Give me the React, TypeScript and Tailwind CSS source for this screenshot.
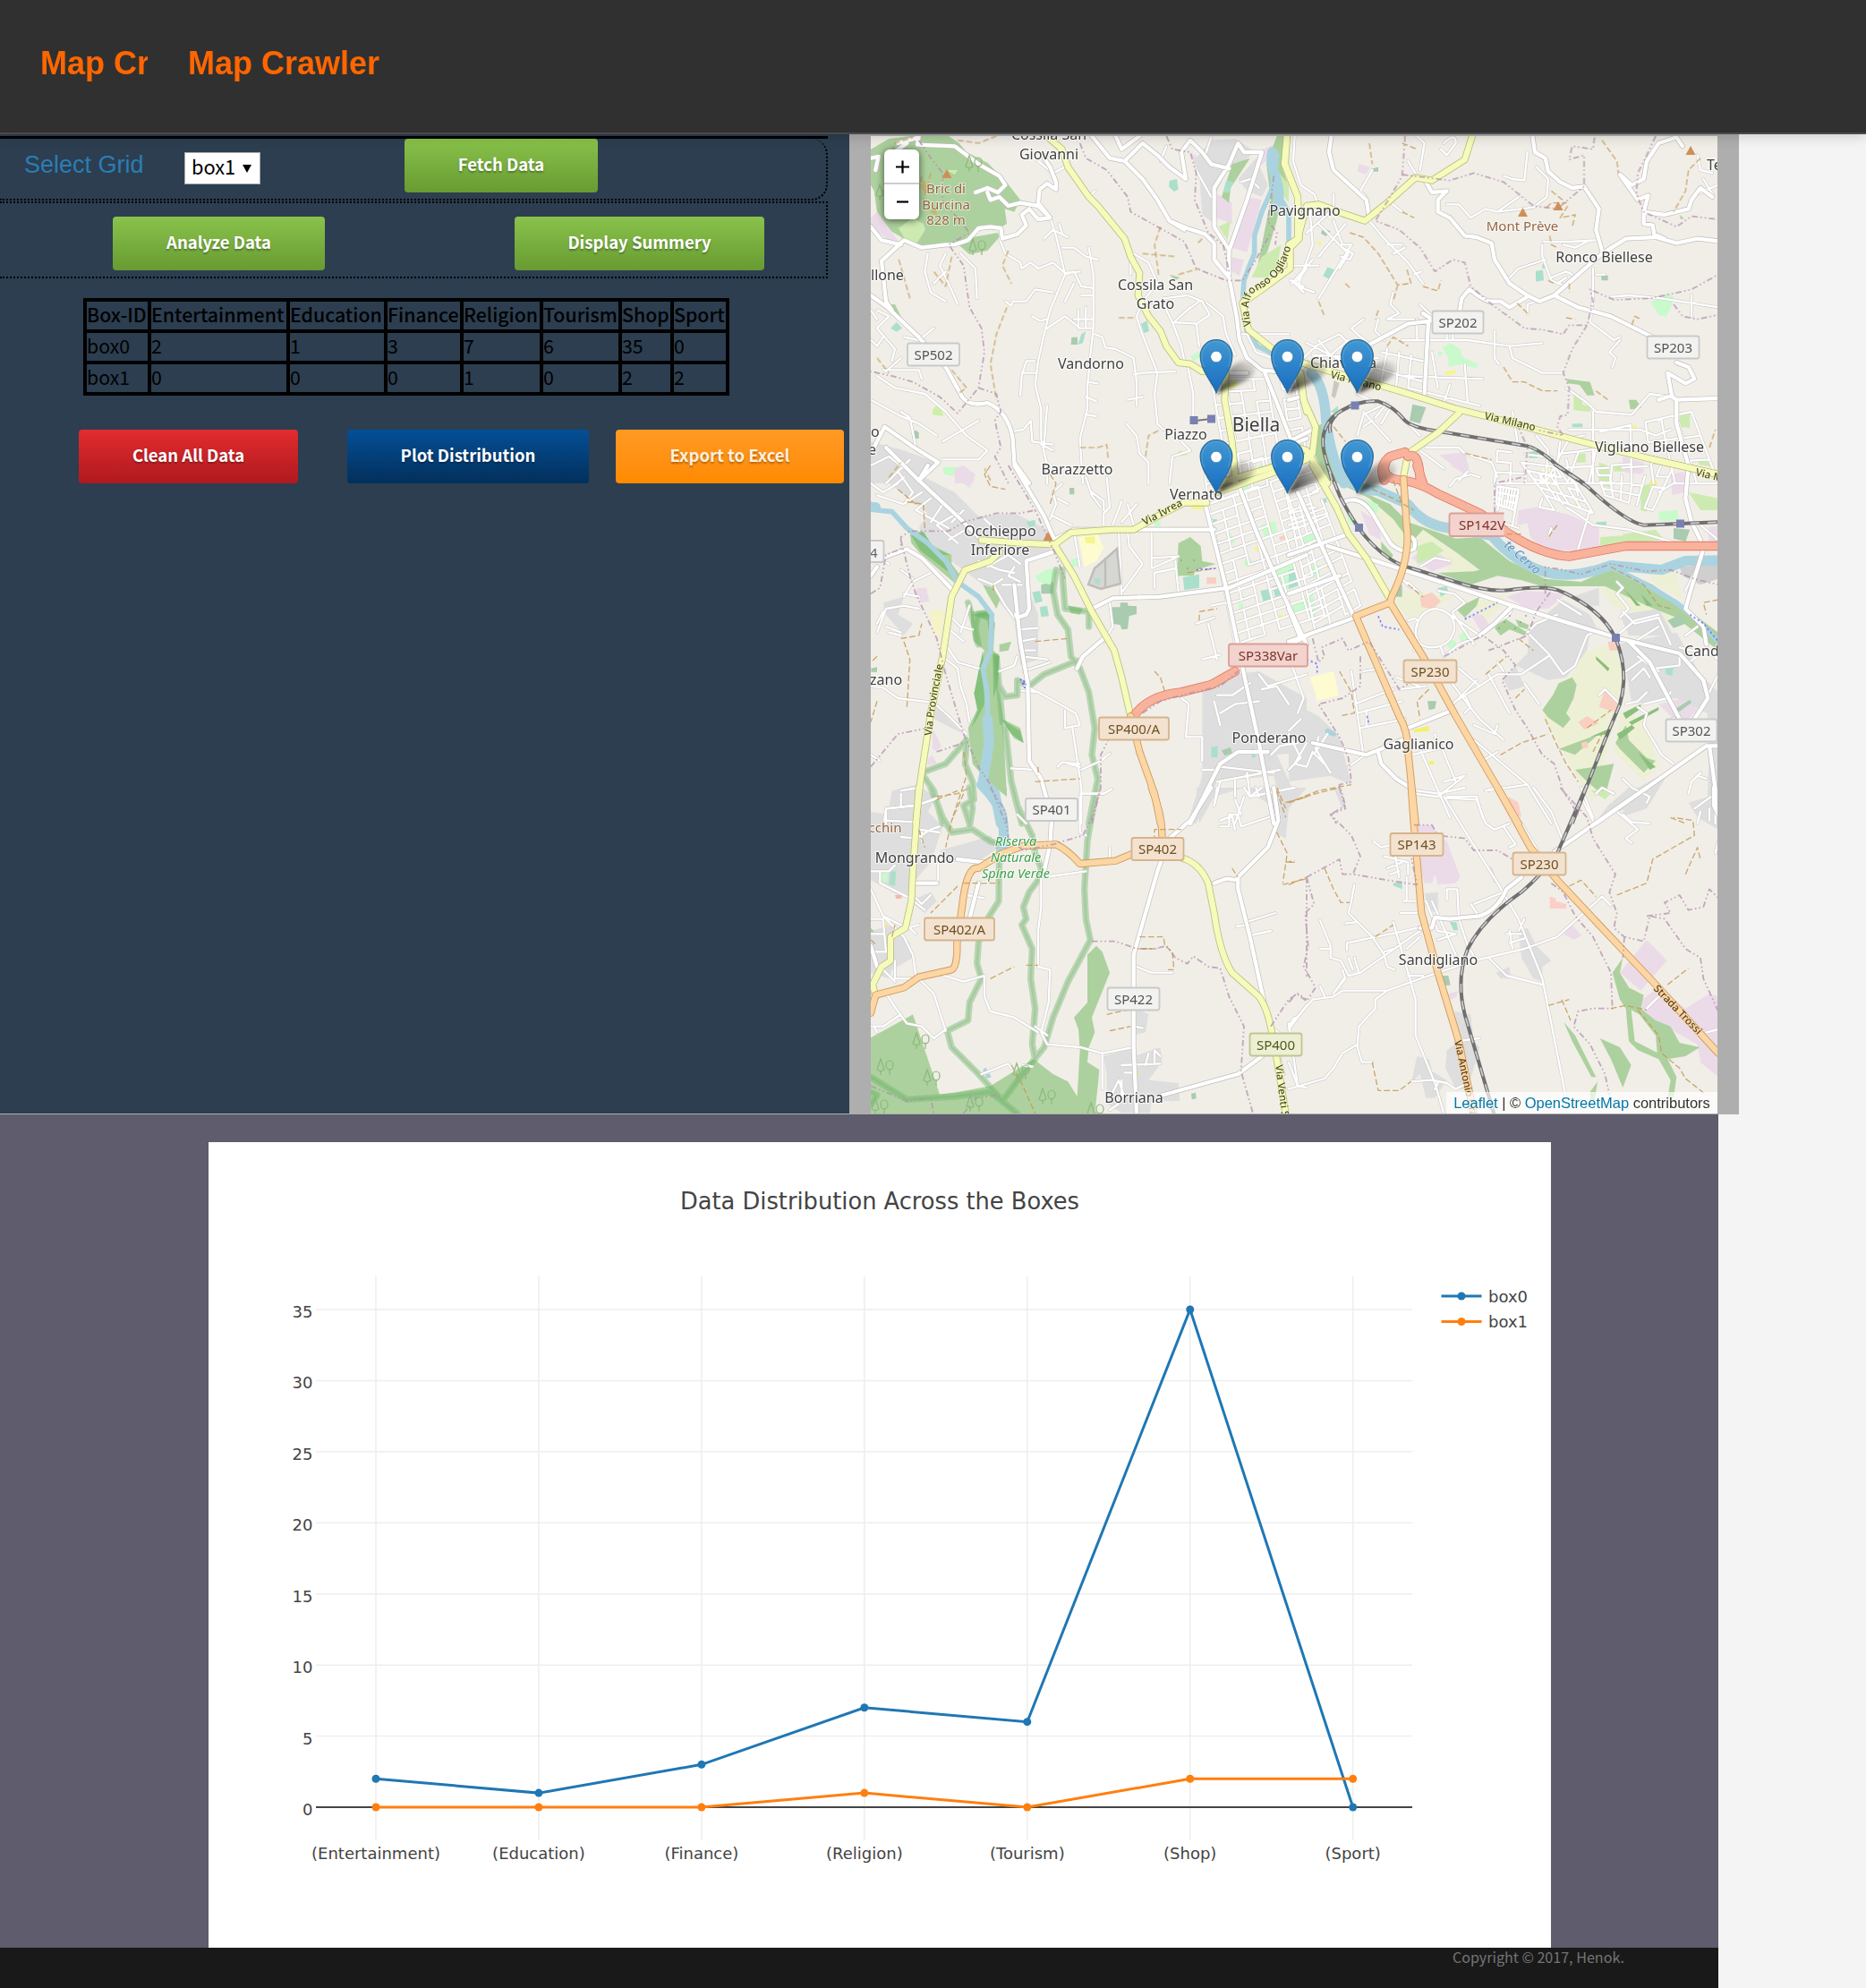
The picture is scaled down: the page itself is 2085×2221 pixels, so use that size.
import React from "react";

type Area = [string, string];
type Tile = {
  x: number;
  y: number;
  areas?: Area[];
  river?: string;
  riverThin?: string;
  reserve?: string;
  minor?: string;
  major?: string;
  yellow?: string;
  orange?: string;
  red?: string;
  rail?: string;
  border?: string;
  track?: string;
  blue?: string;
};
type P = [number, number];

const WOOD = "#add19e";
const GRASS = "#cdebb0";
const PARK = "#c8facc";
const TOWN = "#dedede";
const INDUS = "#ebdbe8";
const FARM = "#eef0d5";
const PITCH = "#aae0cb";
const SCRUB = "#a9cbaf";

/** Street mesh inside the quad a-b-d-c, with some segments left out. */
function mesh(a: P, b: P, c: P, d: P, nu: number, nv: number, keep = 85): string {
  const at = (u: number, v: number): string => {
    const x = (a[0] * (1 - u) + b[0] * u) * (1 - v) + (c[0] * (1 - u) + d[0] * u) * v;
    const y = (a[1] * (1 - u) + b[1] * u) * (1 - v) + (c[1] * (1 - u) + d[1] * u) * v;
    return `${Math.round(x)} ${Math.round(y)}`;
  };
  let out = "";
  for (let i = 0; i <= nu; i++) {
    for (let j = 0; j <= nv; j++) {
      const h = (i * 73 + j * 151 + i * j * 37) % 100;
      const k = (i * 191 + j * 67 + i * j * 53) % 100;
      if (i < nu && h < keep) out += `M${at(i / nu, j / nv)}L${at((i + 1) / nu, j / nv)}`;
      if (j < nv && k < keep) out += `M${at(i / nu, j / nv)}L${at(i / nu, (j + 1) / nv)}`;
    }
  }
  return out;
}

const tiles: Tile[] = [
  {
    x: 960,
    y: 140,
    areas: [
      [WOOD, "M39 80 L100 45 L170 36 H300 L335 60 L360 90 L430 125 L490 185 L540 250 L520 290 L488 280 L495 330 L470 345 L440 335 L400 345 L330 400 L215 405 L150 380 L100 350 L60 290 L50 220 L39 200Z"],
      [WOOD, "M335 402 L380 375 L465 360 L470 375 L430 420 L370 433Z"],
      [GRASS, "M132 345 L180 310 L215 330 L222 350 L190 400 L150 375Z M290 150 L330 150 L320 165Z"],
      [INDUS, "M39 310 L60 290 L130 385 L110 392 L39 340Z M1110 90 L1140 110 L1165 160 L1140 160Z M1200 230 L1250 260 L1250 330 L1195 310Z M1300 240 L1350 250 L1300 425 L1250 410Z M1240 440 L1290 450 L1275 505 L1235 480Z M1355 80 L1400 60 V90 L1340 140 L1310 135Z M320 1150 L390 1170 L380 1200 H320Z"],
      [TOWN, "M1120 120 L1180 50 L1260 45 L1330 90 L1230 160 L1195 230 L1190 330 L1150 300 L1140 160Z M1270 180 L1330 110 L1370 200 L1350 240 L1300 220Z M39 1060 L150 1090 L260 1130 L200 1200 H39Z"],
      [WOOD, "M1400 36 H1425 L1415 130 L1440 210 L1410 260 L1400 320 L1370 420 L1330 500 L1350 400 L1380 250 L1365 130Z M1250 130 L1310 110 L1245 210 L1240 260 L1215 240Z M1040 500 L1075 510 L1060 520Z M105 600 L120 600 L145 650 L135 650 L108 620Z"],
      [GRASS, "M1400 150 L1440 200 V260 L1410 220Z M1350 440 L1415 400 L1400 480 L1370 510 L1315 510Z M1205 340 L1245 320 L1235 385Z"],
      [PITCH, "M1040 185 L1065 180 L1070 215 L1055 222 L1038 205Z M1230 185 L1255 190 L1240 225 L1220 225Z M105 680 L125 660 L145 680 L125 692Z M945 665 L965 655 L972 690 L955 697Z M745 700 L760 690 L750 730 L733 735Z"],
      [SCRUB, "M712 710 H732 V735 H710Z M178 1030 L190 1022 L200 1030 V1050 H178Z"],
      [PARK, "M1110 775 L1140 755 V780 L1120 790Z M285 1145 H325 L318 1172 L282 1165Z M1340 1140 L1400 1125 L1390 1145 L1340 1160Z"],
      ["#cdf0a8", "M245 970 C245 930 280 930 282 975Z M1060 1110 L1075 1090 L1105 1105Z"],
      ["#f5f58c", "M885 70 l10-12 8 12-8 10z M1235 870 l25-15 10 15-25 15z M1325 925 l10-5 4 10-10 4z"],
      ["#c9b36c", "M190 200 l12 20 -12 25z M215 180 l14 24 -8 26 -10 -20z M240 290 l16 -20 6 34z"],
    ],
    river: "M1385 90 C1370 150 1425 200 1400 270",
    riverThin: "M1400 100 L1385 200 L1440 290 L1440 400 M1400 100 L1390 200 L1350 290 L1325 370 L1325 430 L1305 480 L1290 520 L1285 600 L1300 690 M1315 710 L1335 740 L1385 765",
    minor:
      "M640 310 L660 370 L690 500 L640 620 L620 700 L600 790 L590 870 L610 950 V1050 L630 1140 V1200 M770 410 L785 500 V680 L775 770 L765 880 V950 L740 1050 L750 1200 M470 380 L490 430 L540 460 L545 480 L575 460 L600 480 L650 460 L690 495 L740 490 M490 590 L510 605 L515 590 L560 590 L590 550 L650 560 M630 680 L690 640 L740 680 H785 M735 620 V680 M760 610 V680 M720 650 H785 M580 640 L605 655 L630 650 M690 500 L720 490 L745 540 L780 545 M745 570 H780 M690 590 L720 530 M680 410 L720 410 L760 440 L800 450 M620 380 L650 350 L700 375 M670 330 L680 360 M790 700 L815 710 L825 745 L860 750 L920 780 L930 860 V940 M900 920 L950 910 M1000 830 L990 900 L1000 1000 L1020 1020 M920 835 L950 830 L1060 825 M1100 800 L1120 900 V1000 M230 430 L220 490 L240 560 L290 590 M290 430 L270 470 L300 530 L330 600 M340 430 L390 480 L395 580 M250 530 L290 490 M520 1025 L550 1020 L575 990 L580 1060 L650 1070 M610 1070 L650 1090 M540 905 L545 840 L560 790 L590 790 M545 830 L590 830 M765 860 L800 865 M760 910 L795 925 M765 970 L795 975 M920 430 L970 460 L1000 530 L950 590 L930 640 L945 690 L1000 830 M1020 580 L1100 570 L1150 590 L1175 635 L1130 665 L1050 660 L1020 600 L960 590 M1050 660 L1080 740 L1090 790 M1130 665 L1140 740 M1100 620 L1140 590 M1060 655 L1110 610 M1165 595 L1220 640 L1230 700 L1260 770 M910 440 V500 M620 1070 L630 940 M60 620 L100 640 L60 680 L120 750 L110 790 M150 710 L200 720 L250 680 M40 720 L60 740 L80 710 M80 820 H200 L210 850 M90 825 L140 780 M60 840 L120 880 L220 900 L290 960 L360 1040 L430 1090 L400 1120 H280 M280 1060 L400 990 M39 920 L130 970 L200 1000 L260 1040 M140 960 L170 980 L190 1080 M39 1140 L100 1110 L180 1170 M90 1200 L170 1120 M39 620 L60 650 M770 240 L790 220 M1180 40 L1160 100 M1130 150 L1180 240 M1280 190 L1310 180 L1340 210 M1440 430 L1410 460 M1460 530 L1500 480 M1450 520 L1490 560 M1040 1200 L1050 1110 L1110 1090 L1080 1060 M895 1000 L930 1040 L940 1100 L970 1130 V1200 M630 1130 L660 1160 M1280 700 H1440 M1300 700 L1330 760 L1440 800 M1030 70 L1010 120 M600 120 L650 160 L690 140" +
      mesh([1180, 850], [1460, 850], [1240, 1200], [1500, 1110], 6, 8, 80),
    major:
      "M39 570 L95 610 L200 710 L250 770 L290 810 L345 910 Q370 945 430 930 Q500 960 515 1050 L520 1130 L570 1200 M75 455 L150 385 L210 410 L290 400 H320 L365 385 L400 345 L440 340 L475 345 L480 380 L530 365 L560 335 L545 300 L570 280 L600 315 L640 310 L600 260 L605 215 L630 195 L660 215 V190 L640 140 L620 110 M200 36 L195 65 L320 70 L400 130 L470 170 L490 200 L465 225 L430 210 L390 225 M430 225 L440 250 L470 240 L500 270 L540 260 L600 270 L640 310 M39 110 L65 105 L55 150 M130 60 L200 40 M90 110 L160 60 M780 36 L840 110 L890 120 L950 180 L1000 250 L1040 320 L1100 345 L1160 365 L1190 395 V450 L1240 510 L1265 640 L1275 720 L1300 780 L1350 820 L1440 830 M890 120 L950 60 L1000 100 L1040 140 L1095 180 L1080 90 L1110 50 L1150 90 L1180 130 L1240 145 M860 36 L880 80 L940 36 M1040 320 L1090 350 M1270 60 L1240 130 L1190 210 V340 L1235 410 M1270 60 L1290 90 L1350 90 L1300 250 L1240 420 V500 M39 1100 L85 1010 L185 1080 L265 1130 L200 1190 M75 455 L90 590 L110 620 M39 340 L75 385 L140 400 M1360 830 L1400 930 L1450 1060 M1230 830 L1300 830 M1450 1070 L1500 1050",
    yellow:
      "M610 20 L680 80 L700 140 L770 240 L800 270 L890 380 L910 440 L940 495 L935 570 L970 640 L1010 690 L1030 740 L1070 795 L1110 800 L1150 825 H1200 M1230 830 L1225 920 L1250 1060 L1262 1200 M1435 20 L1425 130 L1470 240 L1475 380 L1445 410 V480 L1350 550 L1285 595 L1305 685 L1380 745 L1440 780 L1510 805 M1480 850 L1490 920 L1500 960 M1200 1200 L1340 1160 L1500 1110",
    border:
      "M740 60 L760 110 L830 150 L900 240 L910 290 L1000 340 L1090 390 L1130 480 L1230 520 L1285 520 L1330 450 L1380 360 M1030 36 L1050 80 L1110 90 L1130 160 L1125 250 L1170 360 L1220 400 L1240 490 M1390 170 L1370 320 L1400 360 L1395 400 M200 50 L240 110 L280 160 L280 250 L370 360 L300 400 L350 470 L370 610 L410 680 L420 760 L400 880 L330 965 L270 910 L180 860 L110 840 L39 825 M400 880 L460 900 L475 960 L455 990 L475 1080 L455 1110 L500 1200",
    track:
      "M110 90 L120 60 L180 40 M330 50 L400 60 L460 36 M210 170 L190 260 L80 220 M120 200 L200 300 M240 160 L215 250 M500 420 L480 470 L510 530 M495 610 L460 700 L440 800 L460 920 M310 440 L290 540 L250 490 M1010 340 L990 400 L1005 510 M950 430 L1065 440 M740 1080 H800 L830 1070 L835 1120 M960 1110 L970 1040 L1010 1020 M1070 500 L1140 480 M170 580 L130 440 M310 820 L360 880 L330 900 M60 780 L100 830 M1150 380 L1130 400 M100 1180 L140 1130 M870 645 H920 M440 1190 L420 1150",
  },
  {
    x: 1440,
    y: 140,
    areas: [
      [INDUS, "M235 130 L272 140 L260 165 L230 155Z M505 1105 L590 1095 L605 1150 L585 1168Z M1120 1110 L1190 1130 L1180 1170 L1115 1160Z M1285 1170 L1330 1165 V1200 H1280Z"],
      [SCRUB, "M115 345 L140 355 L125 372 L108 362Z M415 935 L460 945 L440 1000 L405 990Z M1048 503 H1070 V520 H1048Z M280 145 l20-5v15h-16z"],
      [PITCH, "M828 488 L852 485 L855 520 L828 524Z M130 475 L155 485 L135 515 L115 505Z M850 465 h10 v15 h-10z M805 1095 L835 1090 V1115 H805Z M950 1000 h35 v12 h-35z M160 1040 l15 40 M140 960 L165 940 V970Z"],
      [PARK, "M515 745 L540 730 L575 750 L580 775 L635 800 L630 815 L580 800 L535 810 V780Z M500 760 h14 v12 h-14z M1212 590 L1250 580 L1270 560 L1290 575 L1285 600 L1265 642 L1240 635Z"],
      [WOOD, "M930 850 L1010 860 L1025 905 L1000 905 L975 870 L935 865Z M1140 920 L1165 920 L1182 948 L1145 952Z M80 1020 L110 1000 L150 1110 L190 1200 H140 L85 1100Z M1310 300 l15 12-10 4z"],
      [GRASS, "M955 900 L980 905 L985 935 L1015 945 L1010 960 L955 955Z M1310 960 L1345 965 L1345 1015 L1310 1010Z M1040 1130 L1070 1140 L1085 1190 L1040 1185Z M965 1100 H995 V1130 H965Z M1370 1120 l50 10v15l-45-8z"],
      ["#f5f58c", "M525 825 L560 820 V832 L525 838Z M1150 1010 l12-8 8 12-8 10z M92 393 l12-5 8 10-8 5z M850 1155 l20-8 15 40-30 10z M1210 1190 h20 v10 h-20z"],
      ["#c9c9c0", "M152 855 L170 865 L155 915 L143 908Z"],
    ],
    river: "M75 830 Q120 870 125 990 Q140 1110 185 1200",
    minor:
      "M70 270 L80 400 L30 540 L85 560 M100 330 L200 430 L170 480 M0 470 H100 M60 360 L140 290 M150 320 L180 400 L210 400 L100 580 M180 410 L215 430 L205 450 L175 440 M10 530 L80 450 M5 520 L50 540 M190 330 L100 440 M270 320 L320 380 L400 460 L450 530 M330 400 L380 400 M350 430 L390 410 M420 500 L445 490 M280 150 L240 220 L260 240 M20 36 L15 120 L40 200 L85 230 L100 270 M150 230 V280 M330 250 L380 290 M400 120 L430 170 M430 36 L455 60 L440 150 M520 60 Q560 20 560 60 L530 100 L510 80 M800 90 L790 185 L750 180 L720 170 M830 140 L870 180 L865 240 L820 275 L700 290 L660 280 L610 310 L570 265 H530 M700 290 L770 240 M850 440 L880 520 L930 540 M855 390 L940 390 L1030 385 M850 440 V400 M730 520 L770 480 L860 450 M920 400 L960 410 L1000 390 M880 510 L930 490 L950 500 M900 530 L930 510 M1020 480 V580 L1010 660 L1090 720 L1110 710 M1110 720 L1075 760 L1095 780 L1085 810 M1030 500 H1060 M800 630 L800 600 L830 590 M1080 575 L1140 570 L1250 580 L1440 610 M1350 570 V640 M1140 200 L1120 180 M1370 100 L1380 150 L1420 160 M350 560 L340 600 L370 630 L330 650 H420 M300 650 L290 690 L320 720 M430 650 V720 M440 600 L480 640 M380 720 H600 L740 740 L850 730 M740 740 L750 780 L850 830 L915 830 M690 690 V780 L705 800 M250 650 L210 680 L240 710 M530 720 V690 M550 720 V690 M930 880 L1000 930 L1030 960 L1150 970 L1210 900 L1280 910 M1020 960 V1200 M940 1020 H1180 L1230 1040 L1280 1020 M380 840 L650 850 M400 880 L640 940 M480 760 L500 880 M540 870 L520 930 M590 800 L600 930 M0 830 L90 740 L170 700 L230 760 M60 730 L200 800 M80 770 L300 780 M100 720 L140 770 L200 720 M230 700 L280 740 M310 760 L450 790 M280 810 L450 860 M330 750 L310 860 M370 760 L360 880 M410 770 L400 880 M230 860 V900 L290 930 M250 960 L340 1060 M230 1040 L250 970 L310 940 M280 990 L250 1010 M330 930 L290 980 M340 950 L310 1000 M370 970 L440 1040 M460 1080 H570 L590 1100 L680 1130 L700 1180 M440 1090 L520 1150 M750 960 L770 1080 M830 1040 L870 1090 L860 1200 M910 1060 L900 1140 L930 1190 M1390 180 L1420 230 M1370 230 L1440 200" +
      mesh([940, 1050], [1350, 960], [860, 1200], [1440, 1200], 8, 3, 70) +
      mesh([700, 1090], [930, 1120], [690, 1200], [950, 1200], 5, 3, 60),
    major:
      "M145 20 L135 90 L150 150 L260 250 L270 310 M815 20 L825 90 L860 110 L870 155 L910 190 L950 210 L990 205 L1040 280 L1030 350 L1050 420 M460 190 L480 225 L530 220 L500 250 V290 L540 310 L590 370 L630 375 L680 395 L690 450 L740 530 L800 570 L840 590 L890 570 L1050 430 L1130 380 L1230 375 L1300 395 L1370 380 L1440 388 M570 640 L580 580 L605 550 L640 575 L670 590 L710 590 L740 610 L800 575 M890 570 L970 610 L1080 640 L1220 710 M270 735 L400 665 L480 655 M468 660 L455 900 M1260 380 L1225 365 L1220 335 L1190 330 V290 L1260 300 L1340 280 L1350 250 L1380 210 L1420 240 M1190 290 L1205 235 L1170 250 L1110 165 L1150 200 L1190 180 L1200 120 L1240 60 L1300 40 L1320 70 M1300 795 L1340 810 L1360 850 L1330 865 L1270 830 L1285 910 L1300 920 V1000 L1340 1140 M1300 920 L1440 915 M1285 905 L1240 920 M0 920 L40 910 M0 1060 L80 1020 M450 630 L480 650",
    yellow:
      "M-5 20 L-12 130 L30 240 V380 L0 400 V450 M30 380 L60 270 L100 265 L180 295 L255 320 L330 260 L425 175 L480 185 L590 115 L615 36 M0 780 L60 800 L140 825 L250 855 L370 890 L560 950 L680 980 L1000 1065 L1200 1115 L1440 1170 M570 965 L500 1030 L400 1100 L380 1200 M40 830 L50 920 L90 1010 L80 1100 L60 1110 M0 1070 L60 1090 L130 1200",
    red: "M390 1095 L340 1110 Q300 1140 320 1190 M400 1110 Q440 1090 440 1200",
    rail: "M145 1190 L125 1120 Q95 1030 150 975 Q220 920 300 925 Q350 940 390 990 Q420 1015 500 1025 L800 1075 Q840 1085 900 1140 L990 1200 M140 1030 Q130 1000 160 970",
    border:
      "M390 36 L380 170 L340 240 L290 320 L370 350 L440 410 L490 490 L550 450 L590 460 L610 540 L680 600 L790 680 L850 685 L920 700 L940 670 L1000 670 L1020 590 L1010 550 L1090 585 L1210 580 L1260 570 L1350 550 L1440 500 M380 165 L540 185 L620 160 L720 190 L820 270 L900 280 L990 205 L990 100 L940 115 L950 70 L1020 80 L1025 40 M1230 36 L1200 100 L1170 160 L1165 230 L1190 290 L1300 340 L1350 305 L1440 315 M1290 600 L1320 640 L1370 650 L1440 635 M1000 670 L950 750 L920 830 L940 880 L935 970 L910 975 L900 1010 L920 1040 L830 1020 M760 990 L800 1080 L790 1200",
    track:
      "M205 360 L250 375 L300 430 L365 535 L410 530 L395 480 M365 535 L350 590 M380 60 L430 80 M270 60 L280 130 M1050 50 L1100 120 L1105 160 M1380 110 L1340 150 L1330 220 L1290 290 M880 220 L930 260 L880 260 L860 280 M935 270 L910 310 L960 300 L950 340 M875 370 L880 400 L900 410 M100 590 L120 640 M190 530 L210 550 M300 620 L290 650 M330 740 L350 710 L400 740 M720 810 L750 860 L790 860 L850 890 L900 890 M1150 670 L1160 640 L1180 650 M450 540 L500 555 L510 520 M380 290 L420 310 M1030 890 L1070 920 M150 1010 L190 1060 M1410 1080 L1430 1020 M800 630 L760 590 M940 530 V560 M590 1100 L680 1120 M930 645 L960 650 M870 520 L890 530",
  },
  {
    x: 960,
    y: 520,
    areas: [
      [TOWN, "M39 20 L200 30 L320 90 L400 170 L520 160 L640 220 L640 300 L560 330 L570 420 L600 500 L600 650 L540 670 L520 520 L440 420 L350 350 L280 300 L200 210 L230 160 L100 60 L39 50Z M1150 740 L1260 700 L1340 690 L1500 780 V960 L1400 970 L1460 1100 L1420 1160 L1390 1040 L1200 1060 L1130 1200 H1100 L1150 1040Z M110 1090 L190 1070 L260 1110 L230 1160 L180 1200 H90Z M250 850 L350 900 L300 850 L240 780Z M80 460 L150 440 L130 500 L180 530 L150 570 L90 500Z"],
      [INDUS, "M195 410 L225 410 L235 455 L210 460 L190 430Z M245 880 L275 940 L265 960 L245 950Z M320 10 L350 0 L390 30 L370 75 L320 40Z M230 985 l15-15 15 30-30 5z"],
      ["#f6f3c6", "M235 490 L275 480 L285 510 L275 560 L255 580 L245 540Z"],
      ["#fefbd0", "M735 240 L800 230 L820 275 L795 320 L755 340Z"],
      ["#d6d6d2", "M865 280 L875 395 L810 415 L768 400 L790 345 L830 310Z"],
      [WOOD, "M170 230 L210 220 L250 270 L310 300 L310 330 L340 370 L340 410 L280 360 L200 290 L175 260Z M375 460 L380 490 L440 480 L455 530 L450 620 L470 640 L465 740 L480 830 L490 1010 L495 1110 L430 1060 L380 1000 L365 880 L395 820 L385 760 L405 740 L400 680 L420 620 L385 590 L375 530Z M415 400 L450 410 L472 450 L460 480 L430 430Z M480 850 L540 880 L552 930 L520 915 L490 870Z M470 600 L510 590 L500 620 L470 625Z M700 470 L750 480 L740 500 L710 495Z M1070 260 L1110 240 L1145 270 L1150 320 L1195 330 L1130 350 L1120 370 H1065Z"],
      ["#85c17c", "M175 235 L215 222 L250 275 L305 300 L270 300 L330 370 L290 350 L205 285Z M400 690 L415 620 L420 800 L395 850 L375 880 L398 820 L385 765Z M448 630 L470 640 L462 740 L450 780Z M480 852 L540 890 L550 930 L510 900Z M380 500 L440 485 L455 530 L440 600 L430 520Z"],
      [SCRUB, "M848 475 L875 475 V460 H900 L902 470 L930 472 V498 L905 505 L900 548 L880 550 L875 535 L848 530Z M610 400 L650 390 V430 H610Z M705 75 h16 v22 h-16z M1215 955 l30-10 5 20-25 8z M40 680 l20-4v16h-20z"],
      [PITCH, "M580 425 L605 420 L615 455 L590 462Z M605 475 L630 470 L636 505 L610 508Z M1085 375 L1140 365 V410 L1090 418Z M788 380 L810 378 L805 400 L792 395Z M560 190 l30-8 v20 l-20 5z M1180 945 l22-5v38h-22z M1345 420 l25-5 10 35-25 8z M1385 405 l20-5 10 35-20 5z M1420 365 l20-5 12 35-22 8z M1310 950 l15-3 5 30-12 5z M1185 180 h14 v12 h-14z"],
      [PARK, "M590 370 L640 345 L660 360 L640 400 L600 390Z M1395 350 L1455 330 L1480 400 L1425 420Z M1345 200 L1395 185 L1402 230 L1360 245Z M1230 230 l15-5 15 35-20 5z M1280 75 L1305 65 V100 H1285Z M280 10 H320 L315 35 L285 30Z M1450 475 L1500 450 V490 L1465 500Z M1270 465 l15-5 8 30-15 5z M1290 325 a14 14 0 1 0 28 0 a14 14 0 1 0 -28 0 M990 185 h20v20h-20z M710 315 l20-5 5 25-20 5z"],
      ["#f5f58c", "M755 240 L790 238 V262 L760 260Z M1110 130 L1150 125 V150 L1115 145Z M1325 275 l14-4 4 14-14 4z M1405 500 l12-4 4 14-12 4z M880 172 l10 3v10l-8 0z"],
      ["#f8cfc0", "M1165 375 h32 v22 h-32z M1408 240 l20-8 4 14-20 6z"],
    ],
    riverThin:
      "M39 130 L60 150 L110 155 L160 210 L230 260 L290 320 L330 390 L400 440 L445 500 L440 620 L415 680 L430 770 L430 870",
    river: "M39 140 H55 M430 850 L435 930 L415 1060 L455 1100 L475 1200",
    reserve:
      "M365 460 Q390 540 400 600 Q380 560 400 500 L440 500 M660 350 L650 420 L665 500 L700 550 L710 640 L740 680 L770 760 L790 880 L780 970 L800 1050 L770 1200 M680 350 L690 480 L770 490 V540 M570 740 L620 700 L730 655 M570 740 L530 720 L530 770 L490 775 L470 740 M210 1030 L290 1000 L360 920 L355 1000 L380 1060 L385 1120 L350 1140 L370 1200 M215 1040 L250 1090 L280 1200 M490 880 L510 1060 L545 1200 M460 640 L480 860",
    minor:
      "M39 60 L80 90 L130 60 M60 100 L150 130 L180 90 L130 20 M150 40 L100 80 M210 90 L150 130 M240 110 L190 150 L300 210 M280 130 L240 190 M330 160 L260 200 L330 260 M300 250 L380 200 M350 150 L310 190 M420 180 L500 250 M400 320 L470 350 L520 360 M430 340 L500 300 L540 330 M400 380 L450 400 L480 380 M450 400 L490 470 L520 510 M480 400 L545 400 M520 340 L500 370 L540 390 M39 300 L100 330 M60 560 L90 480 L150 470 L200 480 M80 490 L60 530 M100 560 L140 570 M90 540 L140 560 M150 440 L180 390 L240 360 M150 430 L200 440 M180 380 L140 350 M300 500 L340 540 L380 550 M290 540 L350 590 M290 600 L330 660 L400 680 M280 640 L330 680 L340 740 L360 800 L370 860 M39 740 L80 745 L130 780 L250 795 L300 840 L360 900 M530 550 L600 545 M540 590 L590 580 M540 620 L590 620 M545 640 L630 650 M550 690 L640 660 M470 690 L520 670 L530 640 M555 740 L600 760 L690 810 L725 830 L740 870 L690 880 V820 M715 880 L745 1080 V1200 M510 1015 L590 1020 M745 1100 L820 1100 L845 1085 M745 1020 L810 990 L840 965 M700 1000 L740 1010 M665 1010 L680 995 L740 1000 M600 760 L545 755 M640 180 L660 130 L650 90 L680 60 M650 170 L710 200 M700 130 L665 110 M760 40 L780 100 L810 140 M820 200 V160 L840 140 L830 40 M780 90 L820 120 L820 150 M880 120 L850 200 M900 130 L920 200 M880 190 L930 130 M720 220 L740 340 M900 220 L905 270 L950 330 L885 420 M980 220 V345 L1060 310 M870 220 L880 440 M980 310 L1070 305 M990 410 V360 L1060 345 M1060 320 L1070 425 M840 460 L850 540 L820 590 M1190 220 L1230 410 L1260 600 M1130 530 L1190 510 M1170 530 L1200 650 M1180 470 L1230 460 M1150 650 L1210 635 M1190 790 L1210 870 M1080 780 L1105 800 L1095 910 L1150 910 V990 M1200 770 L1250 770 L1310 730 M1210 830 L1260 800 L1340 790 M1340 700 L1370 740 L1500 700 M1350 750 L1400 740 L1440 800 M1190 1020 L1150 1020 M1210 1010 L1390 1030 M1200 1060 L1410 1020 M1190 1140 L1210 1060 M1260 1050 V1110 M1300 1030 L1310 1110 L1460 1080 M1440 900 L1480 980 L1440 1020 M1380 970 L1410 940 L1470 930 M1260 1200 L1290 1110 M39 970 L70 990 M90 1200 V1150 L180 1140 M140 1090 L200 1080 M190 1140 L260 1115 M370 470 L340 560" +
      mesh([1170, 130], [1420, 40], [1260, 600], [1560, 500], 6, 14, 88) +
      mesh([1160, 30], [1400, -40], [1170, 130], [1420, 50], 5, 3, 80),
    major:
      "M520 0 L620 170 L655 250 M90 -60 L200 50 L340 180 L400 240 M39 370 L60 340 M80 310 L160 280 L210 310 L310 415 M650 290 L560 320 L570 480 L560 500 L530 510 L525 500 M520 400 L540 590 L565 730 L570 990 L610 1050 L640 1160 M660 245 L720 215 L920 215 L1190 215 M780 480 L850 445 L1010 440 L1240 410 L1500 300 M1160 130 L1200 290 L1230 410 L1290 700 L1340 930 L1390 1200 M1270 60 L1330 220 L1420 430 L1500 600 M1370 960 L1270 960 L1210 1000 L1110 1200 M820 580 L750 640 L730 680 M1430 610 L1500 570 M200 50 L230 0",
    yellow:
      "M410 250 L540 260 L655 265 L710 225 L850 215 L920 215 L1010 165 L1090 125 L1165 125 M655 265 L720 370 L780 490 L855 620 L880 710 L910 840 M470 290 L440 320 L355 350 L310 440 L280 640 L240 830 L205 1060 L190 1200 M1200 90 L1400 20 L1500 -20",
    orange: "M910 840 L940 960 L990 1100 L1010 1200",
    red: "M920 840 Q970 770 1080 760 L1180 735 L1260 690",
    border:
      "M39 430 L70 410 L90 300 L140 280 V240 L170 220 L300 220 L350 190 L460 160 L540 160 L590 150 L650 280 L690 380 M500 0 L590 150 M140 250 L170 370 L190 430 L260 580 L290 700 L350 900 L400 1010 L440 1070 L490 1200 M39 1010 L130 900 L230 880 M260 960 L350 930 M780 1200 L810 1080 L810 970 L835 920 M950 830 L1010 790 L1080 770 L1210 740 L1270 690",
    track:
      "M220 210 L215 130 L150 120 M130 80 L190 130 M640 30 L660 60 L640 130 M440 0 L420 30 L440 70 L490 80 M60 640 L39 660 M140 580 L200 570 L210 530 M150 590 L170 650 L160 810 M60 790 L39 860 M590 590 L700 580 M990 690 L1010 710 L1025 760 M1140 500 V520 M1140 490 L1200 480 M1100 360 L1190 345 M350 960 L360 1040 L310 1190 M260 1120 L330 1090 M590 1060 L740 1050 M600 1010 L600 1040 M1400 1090 L1430 1180 M1440 1130 L1500 1110 M450 400 L450 430",
    blue: "M1130 350 L1195 345 M540 715 L555 745 L550 720 L560 735",
  },
  {
    x: 1440,
    y: 520,
    areas: [
      [FARM, "M260 90 L340 150 L400 190 L640 250 L760 340 L620 390 L500 330 L420 280 L380 300 L290 200Z M380 420 L560 440 L440 500 L400 510 L350 460Z M1050 600 L1100 620 L1120 700 L1110 800 L1020 1130 L960 1040 L900 920 L850 830 L950 700 L980 640Z M620 460 L730 430 L720 460 L650 540Z M1040 400 L1260 470 L1320 540 L1180 500 L1080 470Z M1110 830 L1190 850 L1240 1000 L1190 1060 L1090 960Z M1190 340 L1300 360 L1320 450 L1230 400Z"],
      [INDUS, "M770 150 L830 140 L940 165 L1040 210 L1040 270 L980 290 L850 280 L810 240 L800 195 L765 200Z M1280 30 L1325 20 V90 L1285 100Z M240 150 L300 190 L310 250 L270 230Z M410 310 L440 290 L510 300 L550 330 L480 355Z M730 440 L790 420 L930 430 L870 480 L800 480Z M610 500 L650 500 L680 545 L650 565Z M1130 -10 h60 v35 h-60z M1408 205 h30 v50 h-30z M540 0 h45 v25z M1240 800 L1320 780 L1370 820 L1340 850 L1290 850Z"],
      [TOWN, "M810 530 L900 500 L1010 560 L1000 620 L930 710 L870 720 L760 670 L800 630Z M720 720 L760 670 L790 740 L740 755Z M1100 600 L1300 560 L1380 700 L1440 760 V850 L1300 780 L1150 800 L1130 680Z M0 790 L100 840 L170 910 L210 1070 L140 1040 L0 1060Z M1170 1080 L1280 1020 L1200 1150 L1110 1180Z M950 440 L1040 410 L1040 470 L1000 470Z M850 510 L920 450 L1010 500 L1040 560 L960 540Z M1110 500 L1240 480 L1290 570 L1140 570Z M1400 780 L1440 760 V1200 H1400 L1410 960Z"],
      ["#cfcfcf", "M1310 340 L1440 330 V380 L1380 400 L1320 370Z"],
      [WOOD, "M120 0 L170 0 L240 85 L340 130 L400 190 L560 245 L640 240 L740 320 L860 380 L980 390 L1090 340 L1220 400 L1320 470 L1440 560 V620 L1300 510 L1200 470 L1060 405 L850 405 L780 385 L700 370 L610 400 L500 360 L620 355 L640 350 L560 290 L450 215 L410 260 L350 180 L270 110 L170 60Z M850 820 L885 770 L905 730 L950 710 L965 735 L955 780 L930 830 L945 850 L920 880 L870 845Z M690 545 L720 510 L800 560 L790 570 L740 550 L710 570Z M760 515 L805 535 L800 550 L770 540Z M1095 930 L1130 870 L1140 920 L1200 980 L1230 990 L1190 1030 L1110 950Z M905 950 L1040 900 L960 970Z M960 1020 L1090 1000 L1060 1110 L1000 1060Z M310 255 L350 300 L340 320 L310 280Z M560 480 L640 440 L630 470 L590 510Z M1175 95 l15-30 8 45-15 0z"],
      [SCRUB, "M1290 210 L1345 215 L1330 255 L1290 245Z M465 790 L495 790 L490 815 L470 820Z M360 415 l20-15 v40 h-20z M1290 820 L1345 785 L1350 795 L1310 825Z M1270 520 l40-20 20 30-40 15z"],
      [GRASS, "M1045 240 L1120 235 V265 L1042 268Z M1120 230 L1230 215 L1260 250 L1120 260Z M1340 90 L1440 110 V150 L1380 150Z M1180 70 L1215 60 L1200 155 L1180 150Z M1040 20 l30-15 10 70-40-10z M430 270 L480 255 L520 285 L490 305 L430 330Z M1090 0 h30 v20 h-30z"],
      [PARK, "M45 240 L90 225 L95 265 L60 280 L45 265Z M240 110 L300 130 L300 160 L270 150Z M15 470 L80 430 L95 490 L80 530 L60 490 L15 490Z M1240 155 L1305 150 V185 H1240Z M570 570 L600 550 L608 580 L580 595Z M532 600 a15 15 0 1 0 30 0 a15 15 0 1 0 -30 0 M75 330 L105 335 V380 L75 370Z M190 140 L210 160 L230 210 L200 190Z"],
      [PITCH, "M0 350 L25 345 L40 400 L0 415Z M500 410 L530 405 L535 425 L510 440Z M1030 190 L1065 188 V205 H1035Z M1262 680 L1290 678 L1285 705 L1265 700Z M115 110 h12v15h-12z"],
      ["#f8cfc0", "M440 440 L480 425 L510 455 L485 480 L445 475Z M735 1110 L770 1130 L780 1180 L750 1160Z M1070 590 h35 v30 h-30z M1040 810 L1060 750 L1105 800 L1090 825Z M970 860 L1000 840 L1040 865 L990 885Z M980 930 l20-5 5 20-20 5z"],
      ["#fefbd0", "M70 710 L150 690 L168 770 L95 790 L85 750Z M850 10 l30-5 5 45-35-5z"],
      ["#f3f06e", "M418 885 L470 872 V890 L420 895Z M470 990 h16 v12 h-16z M1215 50 h18 v25 h-18z M960 125 l12-5 4 15-12 4z M120 335 l12-5v14z"],
      ["#8bbf7c", "M1030 640 L1075 680 L1070 690 L1030 650Z M1120 830 L1180 800 V815 L1130 850Z M1140 860 L1240 810 V820 L1150 870Z M1100 900 L1150 870 L1160 880 L1110 920Z M1170 960 L1230 1010 L1210 1020Z M1010 910 L1080 880 L1070 900Z M1120 410 L1180 470 L1165 470Z M1180 430 L1220 470 L1200 470Z"],
    ],
    river: "M160 0 Q210 85 300 85 L400 130 Q450 200 540 210 L680 235 Q760 330 870 360 Q960 380 1080 335 L1250 350 L1330 320 L1440 318",
    riverThin: "M1080 340 L1200 400 L1300 460 L1360 510 L1440 590 M130 890 L150 900",
    minor:
      "M0 120 L60 100 M0 160 L90 140 M0 200 L130 160 M0 300 L60 280 M400 520 Q440 500 430 540 M425 560 Q430 490 490 480 Q560 490 555 550 Q540 610 480 610 Q430 610 425 560 M550 490 L590 460 L555 430 L500 420 M540 500 L640 570 L570 600 L520 640 M510 610 L520 640 M550 495 L620 600 M640 570 L740 500 L750 470 M800 560 L830 530 L900 500 M800 560 L870 630 L920 700 L960 670 L1000 570 L1040 550 M700 700 L780 700 L870 640 M720 690 L700 660 M790 730 L840 800 M560 790 L700 700 M670 700 L740 830 M570 680 L640 740 M540 810 L630 720 M540 720 L600 800 L640 850 L720 920 M620 870 L690 900 L700 870 M590 770 L610 810 L590 830 M650 990 L700 960 M620 920 L800 1070 L880 1200 M440 950 L540 1180 M410 970 L500 950 L490 900 M510 940 L560 1060 M230 830 L380 790 M220 800 L350 750 M240 880 L390 850 M250 690 L310 680 M360 710 L440 740 M370 750 L460 740 M330 770 L350 780 M210 690 L250 970 M0 640 L50 780 L30 830 M260 820 V870 M270 960 L200 1010 M420 1100 L500 1110 L590 1040 L520 1060 M530 1110 L630 1110 L650 1180 M660 1090 L800 1070 M980 1080 L1020 1180 M1170 810 L1200 830 L1190 870 L1250 970 L1290 1000 M1190 800 L1270 780 L1280 760 M1130 800 L1170 790 L1200 760 M1100 570 L1160 520 L1240 500 M1120 490 L1160 530 L1240 510 L1280 600 M1240 540 L1160 590 M1130 690 L1200 640 M1170 640 L1240 690 M1150 720 L1190 680 L1210 710 M1310 640 V670 L1230 680 M1310 610 L1440 640 M1340 660 L1400 620 L1440 650 M1400 780 L1440 700 M1370 540 L1330 570 M1340 1100 L1350 1060 L1380 1030 M1400 1050 L1370 1040 M1410 960 L1430 1130 V1200 M1150 1080 L1210 1110 L1200 1130 M1090 1100 L1050 1080 L1030 1100 M1120 1050 L1150 1080 M1040 770 L1060 750 L1110 800 M900 450 L980 500 M1100 390 L1120 410 L1100 430 L1140 480 L1110 510 M1370 340 L1330 420 M680 180 L770 210 M770 90 L750 200 M540 70 L560 45 L610 30 L640 40 M570 50 L600 20 M930 140 L970 165 L1020 200 L1140 215 L1300 260 M1010 150 L970 280 M880 210 L870 240 M900 100 L920 130 M960 60 L970 100 M1290 60 L1240 90 M1380 200 L1440 250 M150 50 L80 90 M20 40 L80 20 M60 930 L20 1000 L60 1010 L80 960 L120 1000 M130 900 L90 960 M100 910 L90 950 L140 1030 M40 850 L0 890 M440 600 L420 620 M400 390 L440 430 M380 380 L410 410 M440 340 L490 310 L540 320 M860 100 L890 150 L840 140 L850 110 M710 80 L700 150" +
      mesh([-10, 90], [90, 60], [90, 560], [240, 470], 3, 15, 85) +
      mesh([700, 70], [770, 80], [695, 130], [755, 150], 7, 3, 95) +
      mesh([780, -10], [930, 10], [860, 100], [1020, 160], 4, 4, 75) +
      mesh([1030, 10], [1290, 0], [1060, 100], [1220, 150], 6, 4, 60),
    major:
      "M30 90 L110 270 L220 510 M0 300 L200 230 M130 270 L290 320 L540 400 L750 470 L1010 550 L1110 580 L1310 630 M750 470 L690 530 L640 570 M190 120 Q240 100 280 160 L340 260 Q380 300 420 280 Q430 250 410 240 M0 590 L220 510 M0 430 L170 370 M0 480 L40 580 M400 880 L550 820 M80 930 L260 970 L310 950 L380 920 M300 960 L310 1000 L360 1050 L400 1075 M1030 1200 L1400 940 L1440 940 M1140 590 L1210 660 L1310 850 M1310 630 L1390 720 L1405 780 L1360 850 M1390 280 L1350 410 L1330 480 L1390 540 L1400 600 M1340 0 L1330 110 L1350 190 L1380 250 M1410 940 L1440 1160 M1290 850 L1320 900",
    yellow: "M80 0 L160 140 L200 230 L260 310 L335 440 M1220 -20 L1440 30",
    orange:
      "M385 45 L395 200 Q410 310 345 440 L340 460 L225 505 M225 505 L270 610 L370 840 Q400 890 400 960 L425 1200 M340 460 L450 640 L560 840 L770 1200",
    red: "M325 -10 Q310 30 350 45 L410 55 Q460 70 500 95 L640 160 L740 230 Q850 300 940 305 L1130 270 L1440 270 M430 0 L450 60",
    rail: "M890 -5 L1000 70 Q1130 190 1190 200 L1440 190 M130 0 L170 100 Q200 160 235 210 Q300 300 380 335 L560 390 Q680 430 760 415 Q870 400 920 425 Q1060 490 1100 590 Q1140 700 1110 800 L1060 920 L950 1200",
    border:
      "M860 430 L860 340 L920 350 L980 365 L1080 330 L1200 355 L1280 350 L1360 380 L1440 400 M520 640 L650 570 L720 620 L760 670 L715 720 L760 820 L800 880 L850 970 L890 1000 L920 1090 L970 1170 M670 620 L800 570 L830 490 L880 420 M80 580 L100 660 L120 640 L110 610 L180 580 L200 620 L270 590 L370 750 L440 710 M240 640 V740 L180 780 L100 800 L170 910 L200 980 L210 1060 L170 1070 L190 1140 L140 1170 L160 1200 M780 40 L690 60 L690 180",
    track:
      "M280 80 L350 110 L420 150 M350 50 L380 130 M900 200 L870 240 M730 230 H780 M400 400 L450 440 M660 700 L730 640 M170 690 L210 760 L220 830 L170 840 M470 750 L430 790 L440 850 M710 970 L780 930 L870 900 M860 850 L900 940 L930 1000 L970 1060 M770 580 L820 620 M1080 340 L1190 400 L1240 470 L1280 480 M1440 450 L1390 460 L1400 500 M0 1130 L100 1090 L210 1070 M760 780 L790 750 M1000 880 L1080 820 M1020 960 L1050 900 M1280 1180 L1330 1200",
    blue: "M590 515 L700 460 M300 505 L315 540 L370 550 M1345 500 L1390 530 L1440 590 M60 650 L95 665 V700 M262 840 L270 870",
  },
  {
    x: 960,
    y: 880,
    areas: [
      [TOWN, "M120 20 L190 0 L260 30 L200 50 L280 130 L240 250 L180 320 L170 370 L130 360 L39 310 V80 L90 90Z M270 210 L380 180 L440 160 L470 200 L410 240 L290 250Z M170 380 L240 350 L260 380 L220 420Z M39 480 L110 460 L170 520 L180 570 L110 610 L100 640 L39 620Z M930 740 L970 760 L960 820 L920 830 V900 L1010 870 L1015 920 L970 980 L1070 990 L1075 1050 L980 1050 L975 1090 H880 L830 1060 L830 960 L820 900 L920 870Z M1130 0 H1500 L1440 70 L1430 170 L1390 150 L1380 60 L1290 0 L1190 30 L1140 120Z"],
      [WOOD, "M39 838 L180 760 L270 1028 L330 1020 L440 1000 L585 910 L650 960 L700 985 L740 1050 L770 1060 L800 1092 H39Z M795 530 L815 550 L840 620 L800 720 L780 770 L790 820 L770 870 L765 920 L805 945 L800 1000 L790 1092 L730 1050 L740 880 L735 810 L720 770 L765 720 V560Z M470 0 H495 V30Z M39 470 l10 10v15h-10z"],
      [PITCH, "M105 280 H124 L120 330 L100 325Z"],
      [PARK, "M75 290 l20-5v30l-18 2z"],
      [SCRUB, "M1113 1025 L1128 1022 L1130 1042 L1115 1045Z"],
      ["#f2b7ae", "M120 360 l20 0 5 10-20 3z"],
      ["#aad3df", "M415 945 L425 937 L430 955 L420 960Z M422 962 L438 958 L443 970 L428 975Z"],
      ["#f3f06e", "M88 455 h10v10h-10z M932 950 h8v10h-8z"],
    ],
    river: "M410 -10 Q470 50 480 100 Q490 160 480 220",
    reserve:
      "M240 0 L280 100 L310 150 L380 140 L440 180 L470 190 L468 380 L430 440 L400 520 L395 590 L410 640 L370 720 L365 780 L295 815 L310 870 L400 960 L490 1060 M370 0 L380 70 L370 130 M515 0 L530 60 L580 160 L590 220 L610 270 L600 310 L570 350 L550 400 L560 440 L545 460 L580 540 L575 640 L590 740 L580 860 L590 910 M795 0 L765 180 L755 340 L760 440 L775 510 L700 650 L650 770 L620 870 L540 970 L480 1050 M39 970 L160 1045 L320 1035 L440 1020 L490 1060 L530 1092 M39 1020 L60 1030 L39 1060",
    minor:
      "M85 110 L90 70 L190 60 M90 110 L190 115 M140 20 V60 M190 60 L250 40 M190 170 L240 140 L270 130 M210 180 V150 M140 165 L190 170 L200 140 L270 150 M190 320 H250 L265 310 V250 M70 280 V320 L170 370 L220 410 M39 280 H100 L120 260 M39 340 L80 430 L160 470 L200 460 M190 370 L210 390 L240 360 M160 460 L190 490 M39 440 H80 L90 550 M80 430 L150 500 L180 560 L190 630 L250 690 L290 815 M39 490 H80 M50 550 H100 M80 610 L120 650 M120 580 V640 L200 640 M270 625 L350 650 L420 630 V700 L440 750 L520 770 L600 820 M290 810 L250 840 L210 800 L160 790 L130 750 L90 690 M39 800 L80 800 L140 760 M60 820 L50 800 M200 640 L170 650 M610 290 V400 L600 480 V600 L640 610 L635 720 L610 820 L630 860 M620 300 L760 280 M590 800 L630 830 M630 860 L740 870 L815 890 L920 870 M815 890 V1010 M840 240 V200 M740 30 V150 L760 160 M740 20 L820 20 L845 5 M560 120 L530 90 M620 0 V20 M1300 450 L1395 420 M1265 465 L1300 460 M1310 495 L1380 480 M930 600 L980 620 L1050 620 M920 800 L950 805 M880 930 L1010 925 M960 930 L970 890 M990 920 V880 L1010 900 M890 955 H930 M840 1040 L870 980 L890 1040 M880 1050 V980 M860 1030 L870 1060 L840 1080 M1210 110 L1250 95 L1260 140 M1210 130 L1240 130 V90 L1270 90 L1280 130 L1400 90 M1260 40 L1280 90 M1390 40 L1410 90 M1190 60 L1200 0 M1290 0 L1310 30 L1350 0 M1330 0 L1340 30 M1500 730 L1440 810 M1440 790 L1470 1000 L1500 1005 M1420 830 L1390 810 M410 960 L500 925 L510 940 M550 930 L580 935 M360 360 L420 370 M400 320 L440 310",
    major:
      "M330 240 L420 250 M1180 0 L1110 110 L1040 170 L1000 280 L960 420 L920 560 V870 L930 1092 M645 110 L640 190 L620 280 M1390 0 L1405 110 L1370 200 L1270 300 V340 L1310 500 L1360 730 L1420 960 M1190 320 L1230 305 L1270 310 M1000 1035 L1270 960 L1350 900 M185 320 H260 M400 320 L370 440 M39 530 L60 600",
    yellow:
      "M200 0 L180 280 L175 380 L155 470 L105 500 V580 L75 600 L45 660 L55 700 M1080 235 Q1140 250 1170 320 L1190 420 Q1210 560 1250 620 L1340 700 Q1370 740 1385 830 L1400 910 L1430 1092",
    orange:
      "M39 755 L55 695 L150 670 L200 635 L310 610 Q330 600 328 520 L345 400 Q360 260 400 270 L480 220 L550 195 L660 190 Q700 210 740 255 L860 245 L920 220 M980 0 Q1020 100 1015 180",
    border:
      "M440 0 L490 80 L500 170 L550 210 L650 190 L750 160 L780 100 L810 0 M780 515 H860 L930 540 L990 540 L1030 530 L1060 570 L1100 590 L1120 565 L1170 600 L1210 605 L1240 700 L1290 800 L1280 950 L1320 1092 M1380 800 L1440 710 L1470 690 L1500 710 M39 1000 L160 1050 L240 1040 L250 1092 M350 1092 L390 1040 L470 1030 M1500 300 V640",
    track:
      "M260 30 L330 20 L370 0 M350 20 L310 110 L290 200 M39 510 L60 530 M110 500 L120 460 M330 330 L240 420 M350 320 L470 320 M440 640 L520 600 M560 595 H600 M990 180 V140 L1080 140 M940 500 H1020 L1025 530 L1050 550 L1055 610 H1030 M940 540 H1000 M1400 150 L1435 220 L1420 320 M1430 250 L1460 245 M1420 325 L1500 305 M830 760 L900 745 M840 815 L910 800 M1250 270 L1270 300 M510 930 L540 980 L590 1092 M1430 50 L1500 30 M1400 0 L1430 70 M200 140 L220 200",
  },
  {
    x: 1440,
    y: 880,
    areas: [
      [TOWN, "M455 355 L500 350 V420 L470 410Z M555 750 L610 760 L620 850 L640 870 L600 1010 L560 1010 L525 940 L530 880 L570 850Z M430 900 L470 910 L480 950 L530 980 L490 1040 L460 1040 L440 960 L410 990Z M770 480 L800 470 L830 530 L880 580 L850 600 V650 L820 640 L780 570Z M695 620 L740 600 L745 640 L710 640Z M665 270 l15-5 20 50-10 5z M1040 100 L1170 60 L1230 0 L1140 0 L1070 60Z M1340 50 L1440 20 V140 L1370 100Z M150 0 h15 l25 65-10 5z M0 0 L20 40 L0 45Z"],
      [INDUS, "M420 125 L480 125 L500 160 L530 180 L575 300 L560 320 L500 325 L490 290 L480 320 H455 L430 240Z M1110 620 L1200 510 L1268 580 L1180 680Z M1170 720 L1240 670 L1330 740 L1410 690 L1440 700 V970 L1380 920 L1370 860 L1280 810 L1200 770Z M920 490 L950 462 L983 495 L955 510Z M535 690 l35-8-10 20-20 8z"],
      [WOOD, "M1120 570 L1110 620 L1140 670 L1190 695 L1180 740 L1230 780 L1280 800 L1310 855 L1378 870 L1330 900 L1270 910 L1300 970 L1290 1040 H1270 L1280 980 L1240 910 L1170 880 L1140 850 L1130 740 L1110 710 L1085 620Z M922 785 L960 830 L1030 970 H1015 L950 850Z M1043 840 L1110 870 L1148 930 L1120 1005 L1080 910Z M1010 1020 L1035 985 L1025 1050 H1010Z"],
      ["#f1eee8", "M1148 745 L1175 760 L1230 830 L1235 888 L1160 850Z"],
      [GRASS, "M1010 10 H1090 L1060 40 L1030 20Z"],
      ["#fbcfc8", "M745 40 L765 45 L778 90 L765 95Z M875 365 L895 370 V380 L930 390 L930 405 H875Z"],
      [PITCH, "M350 320 L380 316 V340 L350 328Z M540 450 L562 450 L568 478 L552 478Z"],
      [SCRUB, "M515 630 L535 630 L542 662 L525 662Z"],
    ],
    minor:
      "M0 800 L80 710 L150 700 L180 680 L330 680 L470 630 L620 580 L790 540 L900 500 L1050 365 L1080 395 M330 680 L290 710 V740 L235 800 L230 870 L245 920 L280 920 M230 860 L180 890 L150 940 L120 975 L0 1010 M105 445 L140 530 V570 L175 580 L200 630 L240 620 L440 480 M105 540 L140 540 M105 665 L120 700 M150 690 L190 640 L180 610 M220 325 L210 380 L200 420 L280 500 L320 560 L330 600 L355 610 M190 455 L230 450 M195 545 V520 L340 490 M350 450 L400 620 L425 710 V830 L490 990 L520 1092 M345 490 L430 470 M400 630 H450 M350 540 L320 550 M285 180 L310 200 L350 190 L370 300 M320 230 L400 250 V290 M330 270 L380 250 M395 300 V380 M385 380 H460 M375 420 H440 M340 290 L370 280 M360 200 V240 M530 375 V340 H565 L570 440 L600 530 L630 580 M460 380 L500 480 L560 490 M500 510 L560 490 M480 380 L560 560 M410 985 L480 980 L530 990 L560 1010 L600 990 M500 990 L490 1010 M670 570 L730 630 L850 660 M520 30 L600 160 L700 320 L770 440 L850 640 L940 1092 M730 490 H780 M740 520 L790 505 M740 480 L750 540 M790 440 L770 480 M430 10 L500 20 L590 0 M530 35 L630 40 L660 120 L690 140 L740 120 M720 130 L760 190 L740 200 M820 0 L880 80 L920 180 M780 120 L840 220 M620 390 L720 350 M610 390 L630 420 V430 M980 30 L1020 110 M1100 80 L1170 140 L1130 170 L1150 185 M1120 90 L1150 115 L1210 120 M1380 80 L1370 120 M1360 70 L1430 20 M1440 180 L1430 220 M1410 70 V110 M1200 740 L1240 700 M1400 820 L1440 810 M560 850 L640 840 M200 570 L215 610 M220 570 L235 620 M395 540 L440 500 M660 10 L700 0 M20 770 L0 800 M0 920 L30 1000 M185 640 L150 690",
    major: "M440 470 L480 470 L490 435 L540 440 L640 430 Q700 410 730 340 L780 300 M890 215 L1200 0 M1425 0 V60 L1440 90",
    orange:
      "M410 -10 L420 130 L445 420 L500 620 L570 850 L620 1092 M700 0 L810 200 L900 310 L1050 470 L1230 660 L1440 890",
    rail: "M1000 -10 L900 220 Q850 290 780 350 Q650 440 600 540 Q560 640 590 760 L690 1100",
    border:
      "M170 0 L190 70 L140 90 L210 160 L240 230 L215 290 L330 310 L430 325 L410 230 M420 125 H480 L500 160 L590 170 L620 210 L700 210 L750 240 M60 300 L170 240 L180 290 L225 290 M60 300 L85 390 L55 420 L65 530 L50 600 L90 670 L60 715 L25 690 L0 720 M910 0 L1000 100 L1020 170 L1095 290 L1075 350 L1100 420 L1090 470 L1125 500 L1190 515 L1210 430 L1260 440 L1330 540 L1380 570 L1390 640 L1440 750 M1200 430 L1280 420 L1260 385 L1310 360 L1340 410 L1390 400 L1410 340 L1440 370 M880 320 L920 350 L960 430 L1020 500 L1080 620 L1085 740 L1020 740 L970 750 L955 800 L1010 860 L1060 960 L1075 1030 M1125 500 L1120 570",
    track:
      "M0 50 L90 20 L170 0 M0 325 L60 300 M0 250 H20 M120 270 L150 340 L175 385 L205 385 M290 500 L350 460 M280 920 L300 1015 H370 L410 985 M870 730 L940 710 M915 710 L945 780 M1080 740 L1130 730 L1200 745 M1170 745 L1240 830 L1250 890 L1310 940 L1330 975 L1400 1030 M1100 360 L1200 320 L1220 240 L1360 160 L1355 110 L1290 100 M1330 290 L1370 200 L1380 240 M940 330 L980 310 L1030 365 M1270 660 L1340 605",
  },
];

function Layer({
  name,
  stroke,
  width,
  dash,
  opacity,
  cap = "round",
}: {
  name: keyof Tile;
  stroke: string;
  width: number;
  dash?: string;
  opacity?: number;
  cap?: "round" | "butt";
}) {
  return (
    <g fill="none" stroke={stroke} strokeWidth={width} strokeDasharray={dash} opacity={opacity} strokeLinecap={cap} strokeLinejoin="round">
      {tiles.map((t) =>
        t[name] ? (
          <path key={`${t.x}-${t.y}`} d={t[name] as string} transform={`translate(${t.x} ${t.y}) scale(.33333)`} />
        ) : null,
      )}
    </g>
  );
}

const places: [string, number, number, number?][] = [
  ["Cossila San", 1172, 156],
  ["Giovanni", 1172, 178],
  ["Pavignano", 1458, 241],
  ["Cossila San", 1291, 324],
  ["Grato", 1291, 345],
  ["Vandorno", 1219, 412],
  ["Piazzo", 1325, 491],
  ["Biella", 1403.5, 482, 21],
  ["Barazzetto", 1203.5, 530],
  ["Vernato", 1336.5, 558],
  ["Occhieppo", 1117.5, 599],
  ["Inferiore", 1117.5, 620],
  ["Chiavazza", 1501, 411],
  ["Ronco Biellese", 1792.5, 293],
  ["Vigliano Biellese", 1843, 505],
  ["Ponderano", 1418, 830],
  ["Gaglianico", 1585, 837],
  ["Mongrando", 1022, 964],
  ["Sandigliano", 1607, 1078],
  ["Borriana", 1267, 1232],
];

const shields: [string, number, number, number, string][] = [
  ["SP502", 1043, 396, 58, "w"],
  ["SP202", 1629, 360, 57, "w"],
  ["SP203", 1869.5, 388, 58, "w"],
  ["SP338Var", 1417, 732, 88, "r"],
  ["SP400/A", 1267, 814, 78, "o"],
  ["SP230", 1598, 750, 59, "o"],
  ["SP302", 1890, 816, 57, "w"],
  ["SP401", 1175, 904.5, 58, "w"],
  ["SP402", 1293.5, 948.5, 58, "o"],
  ["SP143", 1583, 943.5, 59, "o"],
  ["SP230", 1720, 965, 59, "o"],
  ["SP402/A", 1072, 1038, 78, "o"],
  ["SP422", 1266.5, 1116, 58, "w"],
  ["SP400", 1425.5, 1167, 58, "y"],
];
const shieldColors: Record<string, [string, string, string]> = {
  w: ["#f2f2f1", "#c9c9c9", "#555555"],
  r: ["#f2d3cd", "#db9e96", "#7d332d"],
  o: ["#f3e2cf", "#d6b48c", "#6e5023"],
  y: ["#ecefd3", "#bfc690", "#4f5a20"],
};

const peaks: [number, number][] = [
  [1058, 195],
  [1701.5, 238],
  [1741, 231],
  [1889, 169],
  [1171, 600],
];

const pins = [440, 552].flatMap((y) => [1359, 1438.5, 1516.5].map((x): P => [x, y]));

function MapCanvas() {
  return (
    <svg className="block" width="946" height="1092" viewBox="973 152 946 1092" fontFamily='"Noto Sans", sans-serif'>
      <defs>
        <linearGradient id="pin" x1="0" y1="0" x2="0" y2="1">
          <stop offset="0" stopColor="#4298d2" />
          <stop offset="1" stopColor="#176dc0" />
        </linearGradient>
        <linearGradient id="shade" x1="0" y1="1" x2="1" y2="0">
          <stop offset="0" stopColor="#000" stopOpacity=".85" />
          <stop offset="1" stopColor="#000" stopOpacity="0" />
        </linearGradient>
        <filter id="soft" x="-30%" y="-30%" width="160%" height="160%">
          <feGaussianBlur stdDeviation="2" />
        </filter>
        <path id="r-ogliaro" d="M1398 364 Q1391 335 1402 326 Q1441 308 1444 262" />
        <path id="r-milano1" d="M1486 422 L1560 441" />
        <path id="r-milano2" d="M1658 468 L1735 486" />
        <path id="r-milano3" d="M1894 531 L1960 547" />
        <path id="r-ivrea" d="M1279 587 L1330 560" />
        <path id="r-prov" d="M1041 822 Q1045 780 1057 730" />
        <path id="r-venti" d="M1425 1190 L1440 1310" />
        <path id="r-antonio" d="M1625 1163 L1652 1290" />
        <path id="r-trossi" d="M1847 1105 L1912 1172" />
        <path id="r-cervo" d="M1680 610 L1725 650" />
      </defs>
      <rect x="973" y="152" width="946" height="1092" fill="#f1eee8" />
      {tiles.map((t) => (
        <g key={`${t.x}-${t.y}`} transform={`translate(${t.x} ${t.y}) scale(.33333)`}>
          {t.areas?.map(([c, d], i) => <path key={i} d={d} fill={c} />)}
        </g>
      ))}
      <Layer name="reserve" stroke="#6fb56b" width={22} opacity={0.42} />
      <Layer name="reserve" stroke="#5fae5f" width={8} opacity={0.22} />
      <Layer name="river" stroke="#aad3df" width={34} />
      <Layer name="riverThin" stroke="#aad3df" width={17} />
      <Layer name="minor" stroke="#cccac8" width={10.5} />
      <Layer name="minor" stroke="#ffffff" width={7} />
      <Layer name="major" stroke="#bfbdbb" width={17} />
      <Layer name="major" stroke="#ffffff" width={13} />
      <Layer name="rail" stroke="#707070" width={12} cap="butt" />
      <Layer name="rail" stroke="#d0d0d0" width={5} dash="30 28" cap="butt" />
      <Layer name="yellow" stroke="#b9be7a" width={24} />
      <Layer name="yellow" stroke="#f6fabb" width={19} />
      <Layer name="red" stroke="#de7a62" width={31} />
      <Layer name="red" stroke="#f9b29c" width={26} />
      <Layer name="orange" stroke="#cf9c5c" width={25} />
      <Layer name="orange" stroke="#fcd6a4" width={19.5} />
      <Layer name="border" stroke="#b391ae" width={5.5} dash="20 9 5 9 5 9" opacity={0.75} cap="butt" />
      <Layer name="track" stroke="#c39a55" width={4} dash="20 9" opacity={0.85} cap="butt" />
      <Layer name="blue" stroke="#6a6aff" width={4.5} dash="7 8" cap="butt" />

      {/* quarry outline and orchard */}
      <path d="M1248 613 L1252 652 L1230 658 L1216 653 L1223 635 L1237 623Z M1235 623 V656" fill="none" stroke="#bdbdb9" strokeWidth="2.4" />
      <g fill="#7aa873" opacity=".8">
        {[0, 1, 2, 3].map((i) => (
          <circle key={i} cx={1320 + i * 7} cy={626 + (i % 2) * 9} r="1" />
        ))}
        {[0, 1, 2, 3, 4, 5].map((i) => (
          <circle key={i} cx={1675 + i * 6} cy={702 - (i % 3) * 7} r="1.1" />
        ))}
      </g>
      {/* tree glyphs in the woods */}
      <g fill="none" stroke="#8bb87c" strokeWidth="1.2">
        {[
          [1025, 1168],
          [985, 1197],
          [1037, 1209],
          [1166, 1230],
          [1085, 1238],
          [1137, 1202],
          [1088, 281],
          [1084, 188],
          [984, 220],
          [979, 1241],
          [1220, 1246],
        ].map(([x, y], i) => (
          <path
            key={i}
            d={`M${x - 1} ${y} l-4 -2 4 -12 4 12z v4 M${x + 9} ${y + 4} v-7 M${x + 5} ${y - 7} a4 5 0 1 0 8 0 a4 5 0 1 0 -8 0`}
          />
        ))}
      </g>

      {/* stations */}
      <g fill="#7981b0">
        <path d="M1336 470 L1353 468" stroke="#777" strokeWidth="2" />
        <rect x="1329.500" y="465" width="9" height="9" />
        <rect x="1349" y="463.500" width="9" height="9" />
        <rect x="1509.500" y="448.500" width="9" height="9" />
        <rect x="1514" y="585" width="9" height="9" />
        <rect x="1801" y="708" width="9" height="9" />
        <rect x="1873" y="580.500" width="9" height="9" />
      </g>
      <g fill="#d08f55">
        {peaks.map(([x, y], i) => (
          <path key={i} d={`M${x - 5.5} ${y + 4} L${x} ${y - 6} L${x + 5.5} ${y + 4}Z`} />
        ))}
      </g>

      {/* street names */}
      <g fontSize="11.700" fontWeight="500" fill="#4a4a32" stroke="#f6fabb" strokeWidth="1.500" paintOrder="stroke">
        <text><textPath href="#r-ogliaro">Via Alfonso Ogliaro</textPath></text>
        <text><textPath href="#r-milano1">Via Milano</textPath></text>
        <text><textPath href="#r-milano2">Via Milano</textPath></text>
        <text><textPath href="#r-milano3">Via Milano</textPath></text>
        <text><textPath href="#r-ivrea">Via Ivrea</textPath></text>
        <text><textPath href="#r-prov">Via Provinciale</textPath></text>
        <text><textPath href="#r-venti">Via Venti Settembre</textPath></text>
      </g>
      <g fontSize="11.700" fontWeight="500" fill="#5b4528" stroke="#fcd6a4" strokeWidth="1.500" paintOrder="stroke">
        <text><textPath href="#r-antonio">Via Antonio Gramsci</textPath></text>
        <text><textPath href="#r-trossi">Strada Trossi</textPath></text>
      </g>
      <text fontSize="13.500" fontStyle="italic" fill="#5b8fc0" stroke="#d8e8ee" strokeWidth="1" paintOrder="stroke">
        <textPath href="#r-cervo">te Cervo</textPath>
      </text>

      {/* place names */}
      <g fontSize="16" fill="#404040" stroke="#ffffff" strokeOpacity=".7" strokeWidth="2.500" paintOrder="stroke" strokeLinejoin="round" textAnchor="middle">
        {places.map(([s, x, y, size], i) => (
          <text key={i} x={x} y={y} fontSize={size ?? 16}>{s}</text>
        ))}
        <g textAnchor="start">
          <text x="973" y="313">llone</text>
          <text x="973" y="488">o</text>
          <text x="970" y="508">e</text>
          <text x="972" y="765">zano</text>
          <text x="1907" y="190">Te</text>
          <text x="1882" y="733">Cand</text>
        </g>
      </g>
      <g fontSize="15" fill="#956540" stroke="#ffffff" strokeOpacity=".6" strokeWidth="2" paintOrder="stroke" textAnchor="middle">
        <text x="1057" y="216">Bric di</text>
        <text x="1057" y="234">Burcina</text>
        <text x="1057" y="251">828 m</text>
        <text x="1701" y="258">Mont Prève</text>
        <text x="989" y="930">cchin</text>
      </g>
      <g fontSize="14.500" fontStyle="italic" fill="#3da04a" stroke="#ffffff" strokeOpacity=".7" strokeWidth="2.200" paintOrder="stroke" textAnchor="middle">
        <text x="1135" y="945">Riserva</text>
        <text x="1135" y="963">Naturale</text>
        <text x="1135" y="981">Spina Verde</text>
      </g>

      {/* road shields */}
      {shields.map(([s, x, y, w, c], i) => {
        const [bg, line, ink] = shieldColors[c];
        return (
          <g key={i}>
            <rect x={x - w / 2} y={y - 12.5} width={w} height="25" rx="2.500" fill={bg} stroke={line} strokeWidth="1.800" />
            <text x={x} y={y + 5.5} fontSize="15" fill={ink} textAnchor="middle">{s}</text>
          </g>
        );
      })}
      <rect x="960" y="604" width="27.500" height="24" rx="2.500" fill="#f2f2f1" stroke="#c9c9c9" strokeWidth="1.800" />
      <text x="972" y="623" fontSize="15" fill="#636363">4</text>
      <path d="M1680.500 573.500 H1622 Q1619.500 573.500 1619.500 576 V596.500 Q1619.500 599 1622 599 H1680.500" fill="#f2d3cd" stroke="#db9e96" strokeWidth="1.800" />
      <text x="1630" y="592" fontSize="15" fill="#7d332d">SP142V</text>

      {/* pins */}
      {pins.map(([x, y]) => (
        <g key={`s${x}-${y}`} transform={`translate(${x} ${y})`}>
          <path d="M0 0 L14 -27 Q27 -42 42 -34 Q48 -24 32 -14Z" fill="url(#shade)" filter="url(#soft)" />
        </g>
      ))}
      {pins.map(([x, y]) => (
        <g key={`p${x}-${y}`} transform={`translate(${x} ${y})`}>
          <path
            d="M0 -1 C-2 -10 -17.800 -25 -17.800 -42.500 A17.800 17.800 0 0 1 17.800 -42.500 C17.800 -25 2 -10 0 -1Z"
            fill="url(#pin)"
            stroke="#2e6c97"
            strokeWidth="1.300"
          />
          <path d="M-13 -30 C-20 -42 -14 -58.500 0 -58.500 C14 -58.500 20 -42 13 -30" fill="none" stroke="#6ab0de" strokeOpacity=".5" strokeWidth="1.200" />
          <circle cx="0" cy="-41.500" r="6.300" fill="#fff" stroke="#3a7fb5" strokeWidth=".8" />
        </g>
      ))}
    </svg>
  );
}

const categories = ["Entertainment", "Education", "Finance", "Religion", "Tourism", "Shop", "Sport"];
const rows = [
  { id: "box0", color: "#1f77b4", values: [2, 1, 3, 7, 6, 35, 0] },
  { id: "box1", color: "#ff7f0e", values: [0, 0, 0, 1, 0, 2, 2] },
];
const px = (i: number) => 187 + i * 181.95;
const py = (v: number) => 743 - v * 15.886;

function Chart() {
  return (
    <svg className="block bg-white" width="1500" height="900" viewBox="0 0 1500 900" fontFamily='"DejaVu Sans", sans-serif' fill="#444">
      <text x="750" y="75" fontSize="26" textAnchor="middle" textLength="446" lengthAdjust="spacingAndGlyphs">Data Distribution Across the Boxes</text>
      <g stroke="#eee" strokeWidth="1.500">
        {categories.map((c, i) => (
          <path key={c} d={`M${px(i)} 150V780`} />
        ))}
        {[5, 10, 15, 20, 25, 30, 35].map((v) => (
          <path key={v} d={`M120 ${py(v)}H1345`} />
        ))}
      </g>
      <path d="M120 743H1345" stroke="#444" strokeWidth="2" />
      {[0, 5, 10, 15, 20, 25, 30, 35].map((v) => (
        <text key={v} x="116.500" y={py(v) + 9} fontSize="18" textAnchor="end">{v}</text>
      ))}
      {categories.map((c, i) => (
        <text key={c} x={px(i)} y="801" fontSize="18" textAnchor="middle">{`(${c})`}</text>
      ))}
      {rows.map((r, n) => (
        <g key={r.id}>
          <g stroke={r.color} strokeWidth="3" fill={r.color}>
            <polyline fill="none" points={r.values.map((v, i) => `${px(i)},${py(v)}`).join(" ")} />
            <path d={`M1377.500 ${172 + n * 28.500}h45`} />
          </g>
          <g fill={r.color}>
            {r.values.map((v, i) => (
              <circle key={i} cx={px(i)} cy={py(v)} r="4.500" />
            ))}
            <circle cx="1400" cy={172 + n * 28.5} r="4.500" />
          </g>
          <text x="1430" y={178.5 + n * 28.5} fontSize="18">{r.id}</text>
        </g>
      ))}
    </svg>
  );
}

function Button({ label, className }: { label: string; className: string }) {
  return (
    <button
      className={`h-[60px] shrink-0 rounded-[4px] bg-linear-to-b pb-[3px] text-[18.5px] leading-none font-bold [text-shadow:0_2px_2px_rgba(0,0,0,0.3)] ${className}`}
    >
      {label}
    </button>
  );
}

const GREEN = "text-white from-[#89c24b] to-[#689b32]";
const colWidths = [72, 155, 109, 85, 89, 88, 58, 62];

export default function App() {
  return (
    <div className="h-[2221px] w-[2085px] overflow-hidden bg-[#f4f4f4] font-['Noto_Sans_CJK_SC',sans-serif]">
      <header className="relative z-10 flex h-[150px] items-center border-b-2 border-[#4a4a4a] bg-[#303030] pb-[6px] pl-[45px] font-['Liberation_Sans',sans-serif] text-[36px] font-bold whitespace-nowrap text-[#ff6600] shadow-[0_2px_14px_rgba(0,0,0,0.18)]">
        <span className="w-[120px] overflow-hidden">Map Crawler</span>
        <span className="ml-[45px]">Map Crawler</span>
      </header>

      <main className="flex h-[1095px] w-[1943px]">
        <section className="w-[949px] border-b border-[#aeaeae] bg-[#2c3e50] pt-[2px]">
          <div className="h-[72px] w-[925px] border-t-[3px] border-black">
            <div className="flex h-[69px] rounded-r-[18px] border-r-2 border-b-2 border-dotted border-black">
              <span className="w-[178px] pt-[12px] pl-[27px] font-['Liberation_Sans',sans-serif] text-[27px] leading-[34px] text-[#2a7db5]">Select Grid</span>
              <div className="mt-[15px] ml-[28px] flex h-[36px] w-[85px] items-center justify-between border border-[#a9a9a9] bg-white pr-[9px] pb-[5px] pl-[7px] text-[21.8px] leading-none text-black">
                <span>box1</span>
                <svg className="mt-[5px]" width="10" height="9" viewBox="0 0 10 9"><path d="M0 0H10L5 9Z" /></svg>
              </div>
              <Button label="Fetch Data" className={`ml-[161px] w-[216px] ${GREEN}`} />
            </div>
          </div>
          <div className="mt-[1px] flex h-[86px] w-[925px] border-y-2 border-r-2 border-dotted border-black pt-[15px] pl-[126px]">
            <Button label="Analyze Data" className={`w-[237px] ${GREEN}`} />
            <Button label="Display Summery" className={`ml-[212px] w-[279px] ${GREEN}`} />
          </div>
          <table className="mt-[22px] ml-[93px] w-[722px] table-fixed border-collapse border-4 border-black text-[21.3px] leading-[28px] text-black">
            <colgroup>
              {colWidths.map((w, i) => (
                <col key={i} style={{ width: w }} />
              ))}
            </colgroup>
            <tbody>
              <tr className="h-[35px]">
                {["Box-ID", ...categories].map((c) => (
                  <th key={c} className="border-4 border-black px-0 pt-0 pb-[3px] text-left font-medium whitespace-nowrap">{c}</th>
                ))}
              </tr>
              {rows.map((r) => (
                <tr key={r.id} className="h-[35px]">
                  {[r.id, ...r.values].map((v, i) => (
                    <td key={i} className="border-4 border-black px-0 pt-0 pb-[3px]">{v}</td>
                  ))}
                </tr>
              ))}
            </tbody>
          </table>
          <div className="mt-[38px] flex pl-[88px]">
            <Button label="Clean All Data" className="w-[245px] from-[#e22c30] to-[#b0191e] text-white" />
            <Button label="Plot Distribution" className="ml-[55px] w-[270px] from-[#034f97] to-[#03305c] text-white" />
            <Button label="Export to Excel" className="ml-[30px] w-[255px] from-[#ff9a22] to-[#ff8a00] text-[#fff0de]" />
          </div>
        </section>

        <section className="w-[994px] bg-[#aeaeae] px-6 pt-[2px] pb-px">
          <div className="relative h-[1092px] overflow-hidden">
            <MapCanvas />
            <div className="absolute top-[15px] left-[15px] flex h-[78px] w-[39px] flex-col rounded-[6px] bg-white text-black shadow-[0_1px_8px_rgba(0,0,0,0.65)]">
              <div className="flex h-[39px] items-center justify-center border-b-2 border-[#ccc] pt-[2px] pl-px">
                <svg width="15" height="15" viewBox="0 0 15 15"><path d="M0 7.500H15M7.500 0.500V14.500" stroke="black" strokeWidth="2.200" /></svg>
              </div>
              <div className="flex h-[39px] items-center justify-center pb-[1px] pl-px">
                <svg width="13" height="3" viewBox="0 0 13 3"><path d="M0 1.500H13" stroke="black" strokeWidth="2.200" /></svg>
              </div>
            </div>
            <div className="absolute right-0 bottom-0 flex h-6 w-[303px] items-center justify-center gap-[4.500px] bg-white/70 font-['Liberation_Sans',sans-serif] text-[16.500px] whitespace-nowrap text-[#333]">
              <span className="text-[#0078a8]">Leaflet</span>
              <span>|</span>
              <span>©</span>
              <span className="text-[#0078a8]">OpenStreetMap</span>
              <span>contributors</span>
            </div>
          </div>
        </section>
      </main>

      <section className="h-[931px] w-[1920px] bg-[#5f5c6d] pt-[31px] pl-[233px]">
        <Chart />
      </section>
      <footer className="flex h-[45px] w-[1920px] justify-end bg-[#191919] pr-[105px] text-[16.1px] leading-[21px] text-[#747474]">
        <span>Copyright © 2017, Henok.</span>
      </footer>
    </div>
  );
}
